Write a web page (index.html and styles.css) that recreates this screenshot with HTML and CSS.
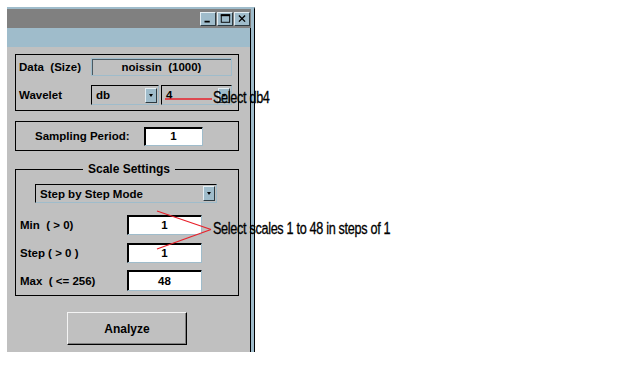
FILE: index.html
```html
<!DOCTYPE html>
<html>
<head>
<meta charset="utf-8">
<link rel="stylesheet" href="styles.css">
</head>
<body>
<div class="frame">
  <div class="win">
    <div class="titlebar">
      <span class="tbtn"><svg width="16" height="14" viewBox="0 0 16 14"><rect x="4" y="9" width="6" height="2" fill="#000"/></svg></span>
      <span class="tbtn"><svg width="15" height="14" viewBox="0 0 15 14"><rect x="3.5" y="2.5" width="9" height="8" fill="none" stroke="#000"/><rect x="3" y="2" width="10" height="2" fill="#000"/></svg></span>
      <span class="tbtn"><svg width="16" height="14" viewBox="0 0 16 14"><path d="M4.5 3 L11.5 10 M11.5 3 L4.5 10" stroke="#000" stroke-width="1.6"/></svg></span>
    </div>
    <div class="band"></div>
    <div class="content">
      <div class="box box-data">
        <div class="row">
          <span class="lbl">Data&nbsp; (Size)</span>
          <span class="field grayfield">noissin&nbsp; (1000)</span>
        </div>
        <div class="row row2">
          <span class="lbl">Wavelet</span>
          <span class="popup pop-db"><span class="ptxt">db</span><span class="arrow"></span></span>
          <span class="popup pop-num"><span class="ptxt">4</span><span class="arrow"></span></span>
        </div>
      </div>
      <div class="box box-samp">
        <span class="lbl">Sampling Period:</span>
        <span class="edit edit-samp">1</span>
      </div>
      <fieldset class="scale">
        <legend>Scale Settings</legend>
        <span class="popup pop-mode"><span class="ptxt">Step by Step Mode</span><span class="arrow"></span></span>
        <div class="srow srow-min"><span class="lbl">Min&nbsp; ( &gt; 0)</span><span class="edit">1</span></div>
        <div class="srow srow-step"><span class="lbl">Step ( &gt; 0 )</span><span class="edit">1</span></div>
        <div class="srow srow-max"><span class="lbl">Max&nbsp; ( &lt;= 256)</span><span class="edit">48</span></div>
      </fieldset>
      <div class="btnrow"><span class="button">Analyze</span></div>
    </div>
  </div>
</div>
<svg class="marks" width="625" height="372" viewBox="0 0 625 372">
  <line x1="165" y1="99" x2="212" y2="99" stroke="#e8202a" stroke-width="1.5"/>
  <line x1="157" y1="211" x2="211" y2="229.5" stroke="#e8202a" stroke-width="1.3"/>
  <line x1="157" y1="249" x2="211" y2="229.5" stroke="#e8202a" stroke-width="1.3"/>
</svg>
<div class="note note1">Select db4</div>
<div class="note note2">Select scales 1 to 48 in steps of 1</div>
</body>
</html>
```
FILE: styles.css
```css
html, body { margin: 0; padding: 0; background: #fff; }
body { width: 625px; height: 372px; position: relative; overflow: hidden;
  font-family: "Liberation Sans", Arial, sans-serif; font-size: 11.5px; font-weight: bold; color: #000; }

.frame { margin: 7px 0 0 7px; width: 244px; border-top: 2px solid #9fbccb;
  background: #9fbccb; padding-right: 3px; border-right: 1px solid #000; }
.win { background: #c0c0c0; border-right: 1px solid #000; height: 343px; display: flex; flex-direction: column; }

.titlebar { height: 19px; background: #808080; display: flex; justify-content: flex-end;
  align-items: flex-start; padding: 3px 1px 0 0; box-sizing: border-box; gap: 1px; margin-right: -1px; }
.tbtn { width: 16px; height: 14px; background: #9fbccb; box-sizing: border-box;
  border: 1px solid; border-color: #e4eef3 #2d3b42 #2d3b42 #e4eef3; display: flex; align-items: center; justify-content: center; }
.tbtn svg { display: block; }
.band { height: 19px; background: #9fbccb; }

.content { padding: 7px 11px 0 8px; flex: 1; }

.box { border: 1px solid #000; }
.box-data { height: 57px; box-sizing: border-box; padding: 3px 6px 0 3px; }
.row { display: flex; align-items: center; height: 18px; }
.row2 { margin-top: 9px; height: 20px; }
.lbl { white-space: nowrap; }
.row .lbl { width: 72px; }
.grayfield { width: 141px; height: 18px; box-sizing: border-box; border: 1px solid #9fbccb;
  box-shadow: inset 1px 1px 0 #4b5a62; display: flex; align-items: center; justify-content: center; }

.popup { height: 20px; box-sizing: border-box; border: 1px solid; border-color: #000 #9fbccb #9fbccb #000;
  display: flex; align-items: center; background: #c0c0c0; }
.ptxt { flex: 1; padding-left: 4px; }
.arrow { width: 12px; height: 15px; margin-right: 1px; background: #9fbccb; box-sizing: border-box;
  border: 1px solid; border-color: #e4eef3 #2d3b42 #2d3b42 #e4eef3; position: relative; }
.arrow::after { content: ""; position: absolute; left: 3px; top: 5px; border-left: 2.5px solid transparent;
  border-right: 2.5px solid transparent; border-top: 3px solid #000; }
.pop-db { width: 68px; }
.pop-num { width: 71px; margin-left: 2px; }

.box-samp { margin-top: 10px; height: 30px; box-sizing: border-box; display: flex; align-items: center; padding-left: 19px; }
.edit { height: 19px; background: #fff; box-sizing: border-box; border: 1px solid; border-color: #000 #9fbccb #9fbccb #000;
  box-shadow: inset 1px 1px 0 #000; display: flex; align-items: center; justify-content: center; }
.edit-samp { width: 59px; margin-left: auto; margin-right: 35px; }

.scale { margin: 11px 0 0 0; padding: 0 0 0 4px; border: 1px solid #000; height: 134px; box-sizing: border-box; min-width: 0; }
.scale legend { margin: 0 auto; padding: 0 5px; font-size: 12px; line-height: 14px; }
.pop-mode { width: 182px; height: 19px; margin: 8px 0 0 15px; }
.pop-mode .arrow { height: 15px; }
.srow { display: flex; align-items: center; }
.srow .lbl { width: 107px; }
.srow .edit { width: 75px; height: 20px; }
.srow-min { margin-top: 12px; }
.srow-step { margin-top: 8px; }
.srow-max { margin-top: 7px; }
.srow-max .edit { height: 21px; }

.btnrow { padding: 16px 0 0 52px; }
.button { display: flex; width: 120px; height: 33px; box-sizing: border-box; align-items: center; justify-content: center;
  border: 1px solid; border-color: #f4f4f4 #000 #000 #f4f4f4; box-shadow: inset -1px -1px 0 #808080; font-size: 12px; }

.marks { position: absolute; left: 0; top: 0; }
.note { position: absolute; font-family: "Liberation Sans", Arial, sans-serif;
  font-weight: normal; font-size: 16px; color: #000; white-space: nowrap; letter-spacing: -0.4px; line-height: 16px;
  transform: scaleX(0.79); transform-origin: 0 50%; -webkit-text-stroke: 0.3px #000; }
.note1 { left: 213px; top: 90px; }
.note2 { left: 213px; top: 221px; }
```
